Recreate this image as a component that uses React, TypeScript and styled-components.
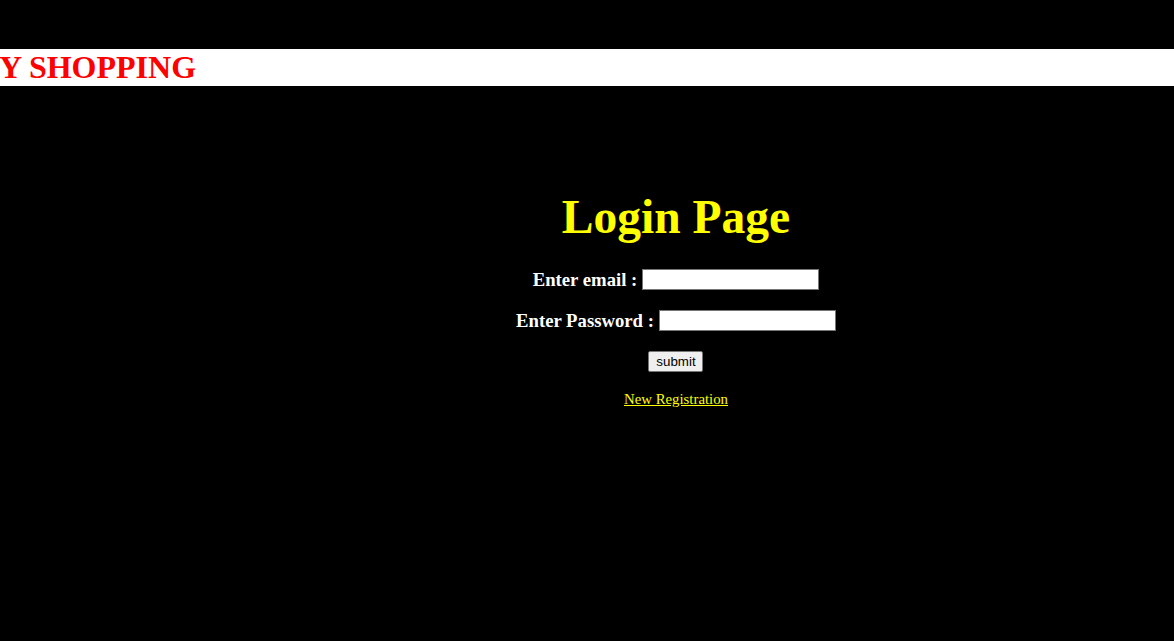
import React from 'react';
import styled, { createGlobalStyle } from 'styled-components';

const GlobalStyle = createGlobalStyle`
    html, body {
        margin: 0;
        padding: 0;
        background: #000;
    }
    body {
        font-family: "Liberation Serif", "Times New Roman", serif;
    }
`;

const Page = styled.div`
    box-sizing: border-box;
    height: 100vh;
    background: #000;
    padding-top: 49px;
    overflow: hidden;
`;

const Banner = styled.div`
    background: #fff;
    height: 37px;
    overflow: hidden;
    white-space: nowrap;
`;

const BannerText = styled.span`
    display: inline-block;
    margin-left: -1px;
    font-weight: 700;
    font-size: 32px;
    line-height: 37px;
    color: #ff0000;
`;

const Main = styled.main`
    padding-left: 178px;
    display: flex;
    flex-direction: column;
    align-items: center;
`;

const Title = styled.h1`
    margin: 104px 0 0;
    font-size: 47.5px;
    line-height: 55px;
    font-weight: 700;
    color: #ffff00;
`;

const Form = styled.form`
    display: flex;
    flex-direction: column;
    align-items: center;
    margin-top: 24px;
    gap: 20px;
`;

const Row = styled.div`
    display: flex;
    align-items: center;
    gap: 5px;
    height: 21px;
`;

const Label = styled.label`
    font-size: 18.72px;
    font-weight: 700;
    color: #fff;
`;

const Input = styled.input`
    box-sizing: border-box;
    width: 177px;
    height: 21px;
    border: 1px solid #767676;
    background: #fff;
    padding: 1px 2px;
    font: 13.33px "Liberation Sans", Arial, sans-serif;
    outline: none;
`;

const Button = styled.button`
    box-sizing: border-box;
    width: 55px;
    height: 21px;
    padding: 1px 6px;
    border: 1px solid #767676;
    border-radius: 2px;
    background: #efefef;
    color: #000;
    font: 13.33px "Liberation Sans", Arial, sans-serif;
`;

const RegisterLink = styled.a`
    margin-top: -1px;
    font-size: 14.8px;
    line-height: 17px;
    color: #ffff00;
    text-decoration: underline;
`;

export default function App() {
    return (
        <>
            <GlobalStyle />
            <Page>
                <Banner>
                    <BannerText>Y SHOPPING</BannerText>
                </Banner>
                <Main>
                    <Title>Login Page</Title>
                    <Form onSubmit={(e) => e.preventDefault()}>
                        <Row>
                            <Label htmlFor="email">Enter email :</Label>
                            <Input id="email" type="text" />
                        </Row>
                        <Row>
                            <Label htmlFor="password">Enter Password :</Label>
                            <Input id="password" type="password" />
                        </Row>
                        <Button type="submit">submit</Button>
                        <RegisterLink href="#">New Registration</RegisterLink>
                    </Form>
                </Main>
            </Page>
        </>
    );
}
